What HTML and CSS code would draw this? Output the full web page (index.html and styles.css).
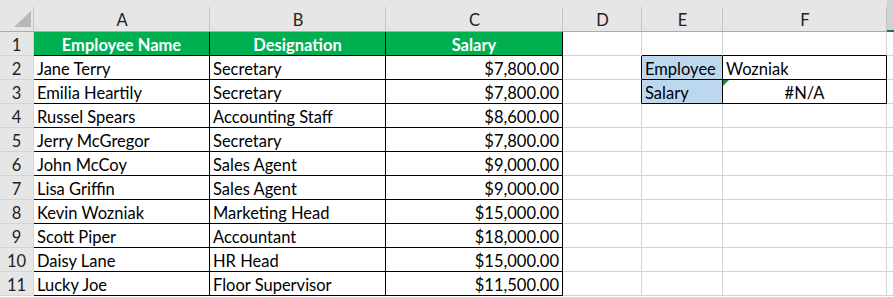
FILE: index.html
```html
<!DOCTYPE html>
<html>
<head>
<meta charset="utf-8">
<link rel="stylesheet" href="styles.css">
</head>
<body>
<table class="sheet">
  <colgroup>
    <col class="w-rh"><col class="w-a"><col class="w-b"><col class="w-c"><col class="w-d"><col class="w-e"><col class="w-f"><col class="w-g">
  </colgroup>
  <thead>
    <tr class="colhead">
      <th class="corner"><svg class="tri" width="17" height="16" viewBox="0 0 17 16"><polygon points="17,0 17,16 0,16" fill="#b7b7b7"/></svg></th>
      <th>A</th><th>B</th><th>C</th><th>D</th><th>E</th><th>F</th><th class="sel"></th>
    </tr>
  </thead>
  <tbody>
    <tr><th>1</th><td class="hd bk">Employee Name</td><td class="hd bk">Designation</td><td class="hd bk">Salary</td><td></td><td class="bb"></td><td class="bb"></td><td></td></tr>
    <tr><th>2</th><td class="bk">Jane Terry</td><td class="bk">Secretary</td><td class="bk num">$7,800.00</td><td class="br"></td><td class="bk lbl">Employee</td><td class="bk">Wozniak</td><td></td></tr>
    <tr><th>3</th><td class="bk">Emilia Heartily</td><td class="bk">Secretary</td><td class="bk num">$7,800.00</td><td class="br"></td><td class="bk lbl">Salary</td><td class="bk ctr err"><span class="flag"></span>#N/A</td><td></td></tr>
    <tr><th>4</th><td class="bk">Russel Spears</td><td class="bk">Accounting Staff</td><td class="bk num">$8,600.00</td><td></td><td></td><td></td><td></td></tr>
    <tr><th>5</th><td class="bk">Jerry McGregor</td><td class="bk">Secretary</td><td class="bk num">$7,800.00</td><td></td><td></td><td></td><td></td></tr>
    <tr><th>6</th><td class="bk">John McCoy</td><td class="bk">Sales Agent</td><td class="bk num">$9,000.00</td><td></td><td></td><td></td><td></td></tr>
    <tr><th>7</th><td class="bk">Lisa Griffin</td><td class="bk">Sales Agent</td><td class="bk num">$9,000.00</td><td></td><td></td><td></td><td></td></tr>
    <tr><th>8</th><td class="bk">Kevin Wozniak</td><td class="bk">Marketing Head</td><td class="bk num">$15,000.00</td><td></td><td></td><td></td><td></td></tr>
    <tr><th>9</th><td class="bk">Scott Piper</td><td class="bk">Accountant</td><td class="bk num">$18,000.00</td><td></td><td></td><td></td><td></td></tr>
    <tr><th>10</th><td class="bk">Daisy Lane</td><td class="bk">HR Head</td><td class="bk num">$15,000.00</td><td></td><td></td><td></td><td></td></tr>
    <tr><th>11</th><td class="bk">Lucky Joe</td><td class="bk">Floor Supervisor</td><td class="bk num">$11,500.00</td><td></td><td></td><td></td><td></td></tr>
  </tbody>
</table>
</body>
</html>
```

FILE: styles.css
```css
html, body {
  margin: 0;
  padding: 0;
  background: #ffffff;
  overflow: hidden;
}
.sheet {
  border-collapse: separate;
  border-spacing: 0;
  table-layout: fixed;
  width: 894px;
  font-family: "Lato", "Liberation Sans", sans-serif;
  font-size: 16.5px;
  color: #000;
}
.w-rh { width: 34px; }
.w-a { width: 176px; }
.w-b { width: 176px; }
.w-c { width: 177px; }
.w-d { width: 79px; }
.w-e { width: 81px; }
.w-f { width: 164px; }
.w-g { width: 7px; }

.sheet td, .sheet th {
  padding: 3px 3px 0 3px;
  height: 20px;
  border-right: 1px solid #d4d4d4;
  border-bottom: 1px solid #d4d4d4;
  white-space: nowrap;
  overflow: hidden;
  line-height: 20px;
  font-weight: normal;
  box-sizing: content-box;
}
.colhead th {
  height: 22px;
  padding: 9px 0 0 0;
  background: #e6e6e6 linear-gradient(#c4c4c4, #c4c4c4) right bottom / 1px 24px no-repeat;
  border-right: 0;
  border-bottom: 1px solid #ababab;
  text-align: center;
  color: #222;
  line-height: 22px;
}
.colhead th.corner {
  position: relative;
  padding: 0;
  height: 31px;
}
.tri {
  position: absolute;
  right: 3px;
  bottom: 4px;
}
.colhead th.sel {
  background: #d2d2d2;
  border-bottom: 2px solid #217346;
  height: 21px;
}
tbody th {
  background: #e6e6e6;
  border-right: 1px solid #ababab;
  border-bottom: 1px solid #c4c4c4;
  color: #222;
  text-align: center;
  padding: 3px 0 0 0;
}
td.bk {
  border-right-color: #000;
  border-bottom-color: #000;
}
td.bb { border-bottom-color: #000; }
td.br { border-right-color: #000; }
td.hd {
  background: #00b050;
  color: #fff;
  font-weight: bold;
  text-align: center;
}
td.num { text-align: right; }
td.ctr { text-align: center; }
td.lbl { background: #bdd7ee; }
td.err { position: relative; }
.flag {
  position: absolute;
  left: 0;
  top: 0;
  width: 0;
  height: 0;
  border-top: 6px solid #1e8c3a;
  border-right: 6px solid transparent;
}
```
